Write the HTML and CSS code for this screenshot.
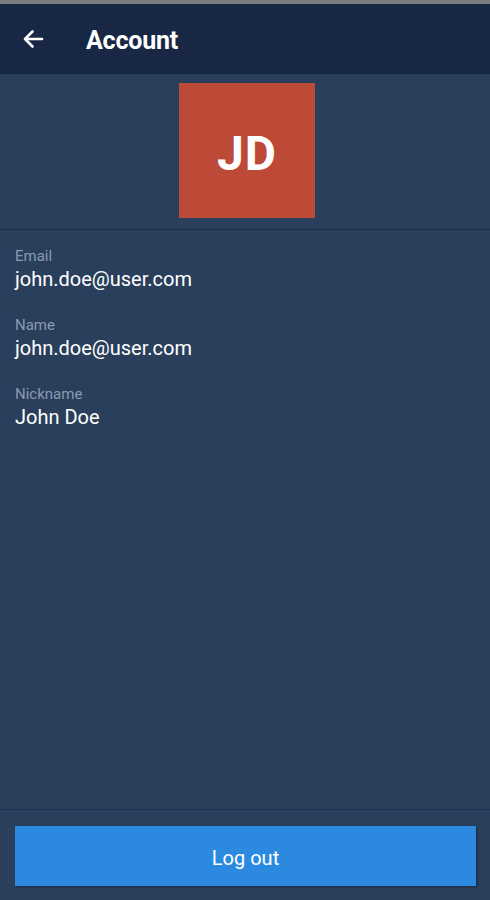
FILE: index.html
```html
<!DOCTYPE html>
<html>
<head>
<meta charset="utf-8">
<link rel="stylesheet" href="styles.css">
</head>
<body>
<div class="app">
  <div class="topstrip"></div>
  <header class="header">
    <svg class="back" width="22" height="20" viewBox="0 0 22 20"><path d="M20 10H3M10.5 2.5L3 10l7.5 7.5" fill="none" stroke="#fff" stroke-width="2.6" stroke-linecap="round" stroke-linejoin="round"/></svg>
    <h1 class="title">Account</h1>
  </header>
  <section class="avatar-wrap">
    <div class="avatar">JD</div>
  </section>
  <main class="fields">
    <div class="field"><div class="label">Email</div><div class="value">john.doe@user.com</div></div>
    <div class="field"><div class="label">Name</div><div class="value">john.doe@user.com</div></div>
    <div class="field"><div class="label">Nickname</div><div class="value">John Doe</div></div>
  </main>
  <footer class="footer">
    <button class="logout">Log out</button>
  </footer>
</div>
</body>
</html>
```
FILE: styles.css
```css
html, body { margin: 0; padding: 0; }
body { font-family: Roboto, "Liberation Sans", sans-serif; background: #2a3f5c; }
.app { width: 490px; height: 900px; display: flex; flex-direction: column; background: #2a3f5c; }
.topstrip { height: 4px; background: #7b7d80; }
.header { height: 70px; background: #182844; display: flex; align-items: center; }
.back { margin-left: 22px; }
.title { margin: 2px 0 0 42px; color: #fff; font-size: 25px; font-weight: 700; letter-spacing: -0.2px; }
.avatar-wrap { display: flex; justify-content: center; padding: 9px 0 11px 4px; border-bottom: 1px solid #1c2d47; }
.avatar { width: 136px; height: 135px; box-sizing: border-box; padding-top: 5px; background: #bd4a37; color: #fff; font-size: 48px; font-weight: 700; display: flex; align-items: center; justify-content: center; letter-spacing: 1px; }
.fields { flex: 1; padding: 17px 15px 0; display: flex; flex-direction: column; gap: 23px; }
.field { display: flex; flex-direction: column; }
.label { color: #8b9ab0; font-size: 15px; line-height: 18px; }
.value { color: #fff; font-size: 20px; line-height: 28px; }
.footer { border-top: 1px solid #1f3150; padding: 16px 14px 14px 15px; }
.logout { width: 461px; height: 60px; display: block; border: none; padding: 4px 0 0; background: #2b8ae0; color: #fff; font-family: Roboto, "Liberation Sans", sans-serif; font-size: 20px; box-shadow: 1px 1px 2px rgba(0,0,0,0.4); }
```
